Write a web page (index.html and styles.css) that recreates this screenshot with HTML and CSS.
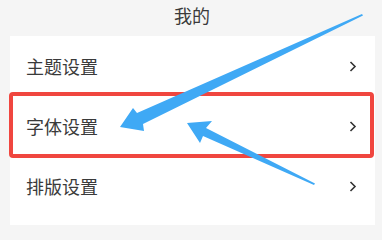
FILE: index.html
```html
<!DOCTYPE html>
<html lang="zh">
<head>
<meta charset="utf-8">
<link rel="stylesheet" href="styles.css">
</head>
<body>
<div class="page">
  <header class="top">我的</header>
  <section class="card">
    <div class="row"><span class="label">主题设置</span><svg class="chev" width="8" height="11" viewBox="0 0 8 11"><path d="M1.5 1 L6 5.5 L1.5 10" fill="none" stroke="#333" stroke-width="1.6"/></svg></div>
    <div class="row"><span class="label">字体设置</span><svg class="chev" width="8" height="11" viewBox="0 0 8 11"><path d="M1.5 1 L6 5.5 L1.5 10" fill="none" stroke="#333" stroke-width="1.6"/></svg></div>
    <div class="row"><span class="label">排版设置</span><svg class="chev" width="8" height="11" viewBox="0 0 8 11"><path d="M1.5 1 L6 5.5 L1.5 10" fill="none" stroke="#333" stroke-width="1.6"/></svg></div>
  </section>
  <div class="highlight"></div>
  <svg class="arrows" width="382" height="225" viewBox="0 0 382 225">
    <polygon fill="#3fa9f5" points="120,127 133,108 137,113 362,14 363,15.5 143,124 144,131"/>
    <polygon fill="#3fa9f5" points="187,123 212,121 206,128 315,183.5 314,185 203,136 200,143"/>
  </svg>
</div>
</body>
</html>
```
FILE: styles.css
```css
html, body {
  margin: 0;
  padding: 0;
}
body {
  background: #f5f5f5;
  font-family: "Noto Sans CJK SC", "Noto Sans", sans-serif;
  color: #3a3a3a;
}
.page {
  position: relative;
  width: 382px;
  height: 225px;
  overflow: hidden;
}
.top {
  height: 36px;
  display: flex;
  align-items: center;
  justify-content: center;
  font-size: 18px;
  padding-left: 2px;
  padding-bottom: 6px;
  box-sizing: border-box;
}
.card {
  background: #ffffff;
  margin: 0 7px 0 10px;
  height: 189px;
}
.row {
  height: 60px;
  display: flex;
  align-items: center;
  justify-content: space-between;
  padding: 0 18px 0 16px;
}
.label {
  font-size: 18px;
  line-height: 1;
}
.chev {
  display: block;
}
.highlight {
  position: absolute;
  left: 9px;
  top: 92px;
  width: 365px;
  height: 66px;
  box-sizing: border-box;
  border: 4px solid #f0463f;
  border-radius: 4px;
}
.arrows {
  position: absolute;
  left: 0;
  top: 0;
}
```
